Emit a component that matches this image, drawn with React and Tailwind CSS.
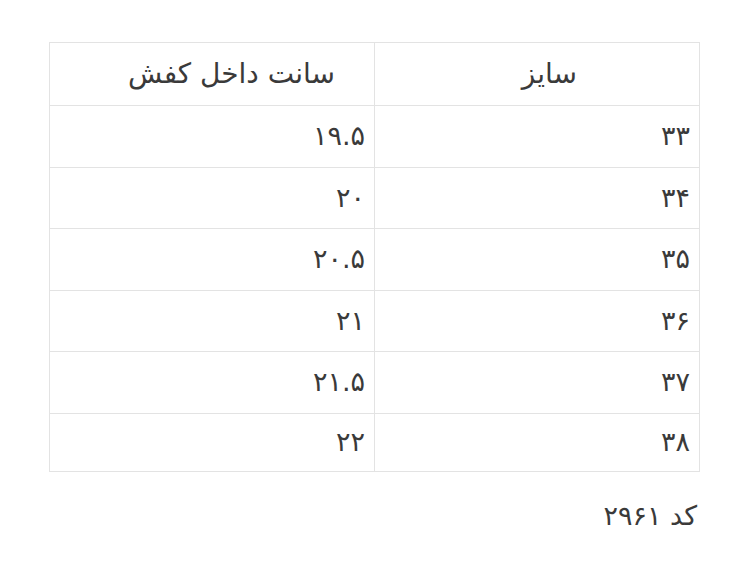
import React from 'react';

const rows = [
  ['۳۳', '۱۹.۵'],
  ['۳۴', '۲۰'],
  ['۳۵', '۲۰.۵'],
  ['۳۶', '۲۱'],
  ['۳۷', '۲۱.۵'],
  ['۳۸', '۲۲'],
];

export default function App() {
  return (
    <div
      dir="rtl"
      className="w-[750px] h-[561px] bg-white text-[#3a3a3a] pt-[42px] pl-[49px] pr-[50px]"
      style={{ fontFamily: '"DejaVu Sans", sans-serif' }}
    >
      <table className="w-full border-collapse table-fixed">
        <thead>
          <tr className="h-[63px]">
            <th className="border border-[#e3e3e3] font-normal text-[28px] text-right pr-[122px]">سایز</th>
            <th className="border border-[#e3e3e3] font-normal text-[28px] text-right pr-[39px]">سانت داخل کفش</th>
          </tr>
        </thead>
        <tbody>
          {rows.map(([size, cm], i) => (
            <tr key={size} className={i === rows.length - 1 ? 'h-[58px]' : 'h-[61.5px]'}>
              <td className="border border-[#e3e3e3] text-[27px] pr-[9px] text-right">{size}</td>
              <td className="border border-[#e3e3e3] text-[27px] pr-[9px] text-right">{cm}</td>
            </tr>
          ))}
        </tbody>
      </table>
      <p className="mt-[24px] pr-[3px] text-[27px]">کد ۲۹۶۱</p>
    </div>
  );
}
